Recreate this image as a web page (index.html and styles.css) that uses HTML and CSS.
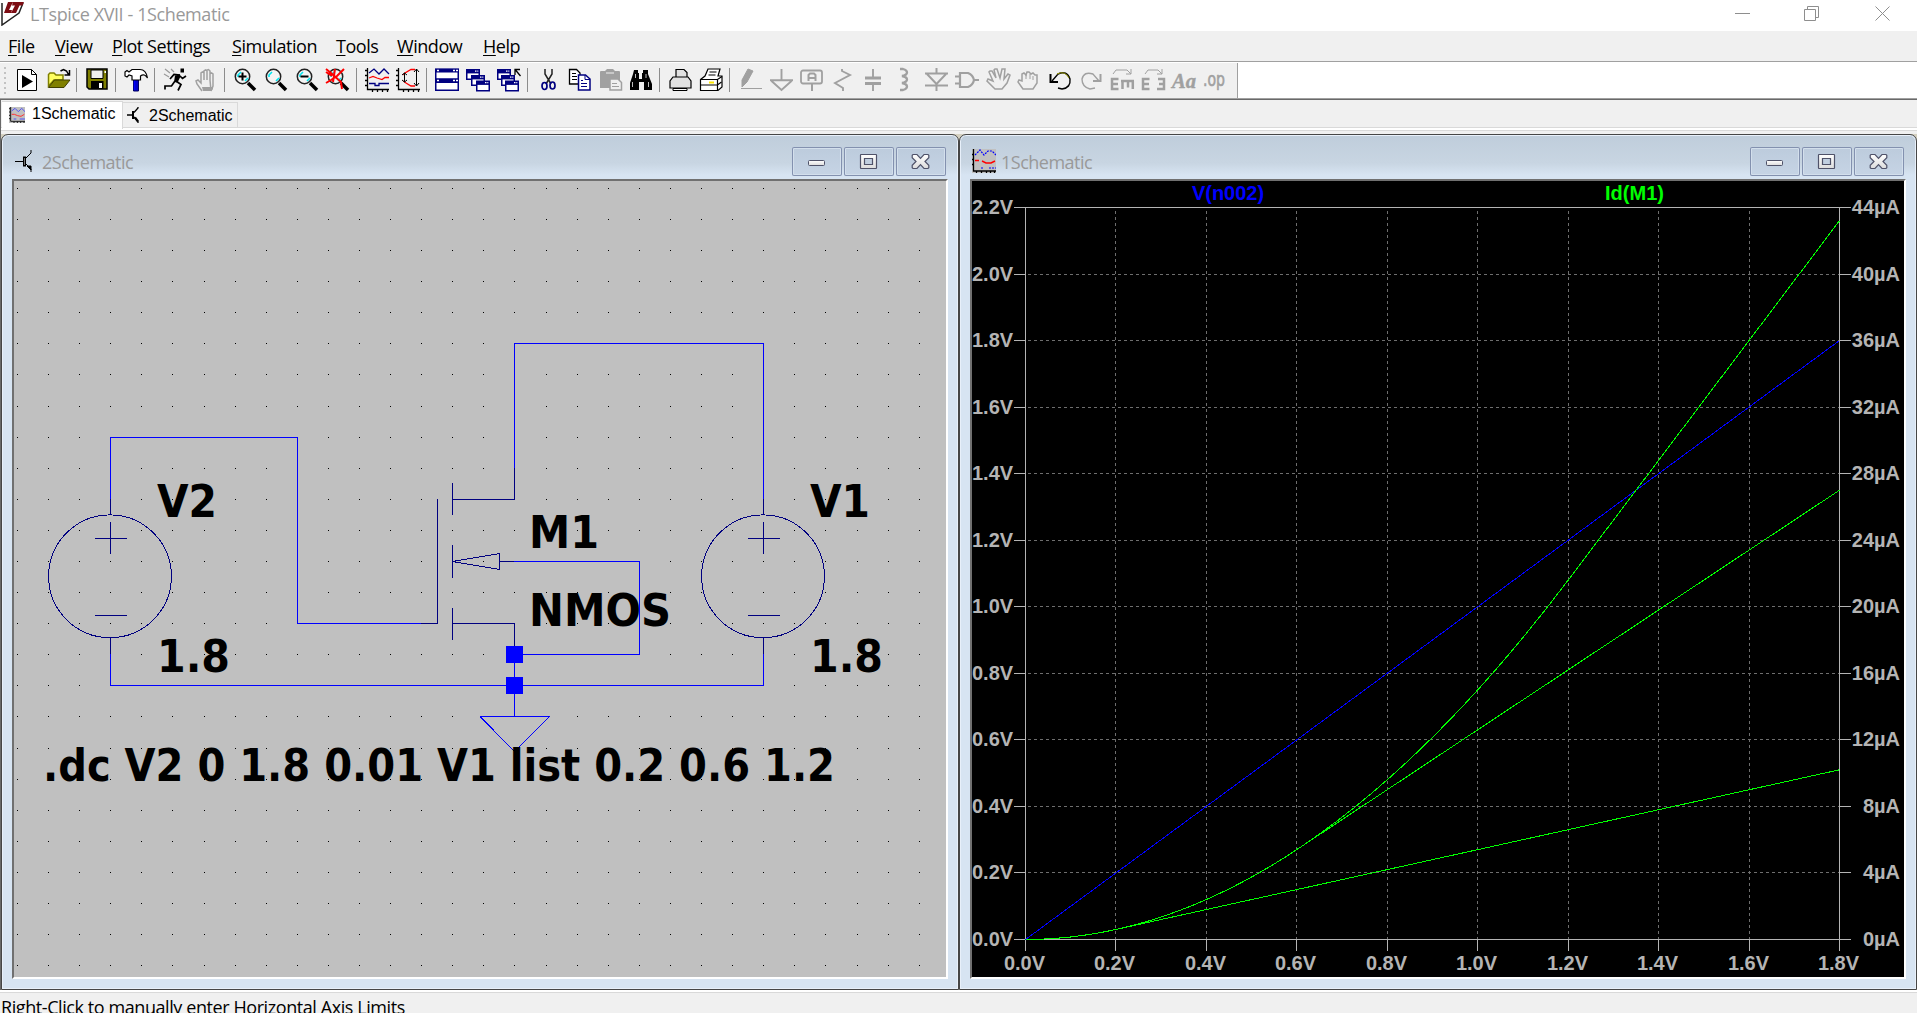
FILE: index.html
```html
<!DOCTYPE html>
<html lang="en">
<head>
<meta charset="utf-8">
<title>LTspice XVII - 1Schematic</title>
<link rel="stylesheet" href="styles.css">
</head>
<body>
<svg class="defs" width="0" height="0">
  <defs>
    <g id="lens"><path d="M15 15l7 7" stroke="#000" stroke-width="3.5" fill="none"/><circle cx="9.500" cy="8.500" r="7.200" fill="#f4f4f4" stroke="#222" stroke-width="1.500"/><path d="M5 9V7l3-3M12 13l3-3" stroke="#00e5f0" stroke-width="1.600" fill="none"/></g>
    <g id="miniwin"><rect x=".75" y=".75" width="12.500" height="9.500" fill="#fff" stroke="#000080" stroke-width="1.500"/><path d="M1 2.700h12" stroke="#000080" stroke-width="3.400"/><path d="M9 2.200h1.500M11.300 2.200h1" stroke="#fff" stroke-width="1.300"/></g>
    <g id="plotaxes"><path d="M2.500 0v21.500H24M0 2.500h2M0 7.500h2M0 12.500h2M0 17.500h2M7.500 22v2M12.500 22v2M17.500 22v2M22.500 22v2" fill="none" stroke="#000" stroke-width="1.300"/></g>
    <linearGradient id="glyph" x1="0" y1="0" x2="0" y2="1"><stop offset="0" stop-color="#fff"/><stop offset="1" stop-color="#dcdcdc"/></linearGradient>
    <g id="btn-min"><rect x="16.500" y="13.500" width="16" height="5" rx="1" fill="url(#glyph)" stroke="#4f5269"/></g>
    <g id="btn-max"><path fill-rule="evenodd" d="M17 7.500h15q.5 0 .5.5v13q0 .5-.5.5H17q-.5 0-.5-.5V8q0-.5.5-.5zM20.500 11.500v6h8v-6z" fill="url(#glyph)" stroke="#4f5269" stroke-width="1.200"/></g>
    <g id="btn-close"><path d="M17 7.500h4l3.500 3.800 3.500-3.800h4l.8.8v2.500L29 14.500l3.800 3.700v2.500l-.8.8h-4l-3.500-3.800-3.500 3.800h-4l-.8-.8v-2.500l3.800-3.700-3.800-3.700V8.300z" fill="url(#glyph)" stroke="#4f5269" stroke-width="1.200"/></g>
    <path id="dots" d="M17 .5h1m30 0h1m30 0h1m30 0h1m30 0h1m30 0h1m31 0h1m30 0h1m30 0h1m30 0h1m30 0h1m30 0h1m30 0h1m30 0h1m30 0h1m30 0h1m30 0h1m31 0h1m30 0h1m30 0h1m30 0h1m30 0h1m30 0h1m30 0h1m30 0h1m30 0h1m30 0h1m31 0h1m30 0h1m30 0h1" stroke="#000" fill="none"/>
    <g id="source">
      <circle cx="110" cy="576.300" r="61.400"/>
      <path d="M110.500 499v15M95 538.500h32M110.500 522v32M95 615.500h32M110.500 638v16"/>
    </g>
  </defs>
</svg>

<header class="titlebar">
  <svg class="app-icon" width="26" height="26" viewBox="0 0 26 26">
    <path d="M2 3v22l17-12 4-10" fill="#fff" stroke="#222" stroke-width="1.500"/>
    <path d="M8 2h5L9 10h3l-1 3H4zM13 2h11l-1.500 3.500h-3L16 13h-5l4-7.500h-3z" fill="#7d0d14"/>
  </svg>
  <h1>LTspice XVII - 1Schematic</h1>
  <svg class="window-controls" width="156" height="16" viewBox="0 0 156 16" fill="none" stroke="#8e8e8e">
    <path d="M0 7.500h15M69.500 3.500h11v11h-11zM72.500 3.500v-3h11v11h-3"/>
    <path d="M140.500.500l14 14M154.500.500l-14 14"/>
  </svg>
</header>

<nav class="menubar">
  <span><u>F</u>ile</span><span><u>V</u>iew</span><span><u>P</u>lot Settings</span><span><u>S</u>imulation</span><span><u>T</u>ools</span><span><u>W</u>indow</span><span><u>H</u>elp</span>
</nav>

<div class="toolbar-row">
<div class="toolbar">
  <i class="grip"></i>
  <svg viewBox="0 0 24 24"><path d="M2.500 1.500h14l5 5v16h-19z" fill="#fff" stroke="#000"/><path d="M16.500 1.500v5h5" fill="none" stroke="#000"/><path d="M7 7v13l11-6.500z"/></svg>
  <svg viewBox="0 0 24 24"><path d="M2.500 18V6.500L4 5h4l2 2h7v5H8z" fill="#ffff60" stroke="#808000" stroke-width="1.500"/><path d="M2.500 19.500L8.500 12H24l-6 7.500z" fill="#808000" stroke="#404000"/><path d="M14.500 3l3-1.500 3 1.500 2 3.500M23.500 2v5h-5" fill="none" stroke="#000" stroke-width="1.500"/></svg>
  <i class="sep"></i>
  <svg viewBox="0 0 24 24"><path d="M2 1h20v20H4l-2-2z" fill="#808000" stroke="#000" stroke-width="1.500"/><path d="M6 2h12v8.500H6z" fill="#f0f0f0" stroke="#000"/><path d="M6 13h12.500v8H6z"/><path d="M14 15h3v5h-3z" fill="#fff"/><path d="M19.500 3h1.500v2h-1.500z" fill="#fff"/></svg>
  <i class="sep"></i>
  <svg viewBox="0 0 24 24"><path d="M9.500 10h5v13h-5z" fill="#0000c8" stroke="#000060"/><path d="M10.500 11v11" stroke="#00f" stroke-width="1.500"/><path d="M1 4l2-1.500L5 4l3-2.500h8q6 0 7.500 8.500-3-5-7-2v4H8V8L5 7 3 9 1 8z" fill="#fff" stroke="#000" stroke-width="1.200"/></svg>
  <i class="sep"></i>
  <svg viewBox="0 0 24 24"><path d="M17.500.5H21v4h-3.500zM12 7.500l5-1 .5 2-3 6-3.500-.5z"/><path d="M17 7l-6-.5-4 4.500M17 8l2.500 2.500L23 8M13 13l5 3.500-3 6M12 13l-3.500 5H2v3.500" fill="none" stroke="#000" stroke-width="1.700"/><path d="M2 1l5 4M8 1l3 3M1 6l5 3" stroke="#999" stroke-width="1.200"/></svg>
  <svg class="gray" viewBox="0 0 24 24"><path d="M8 23l-5-7-1-3 2-1 3 3V5l1.500-1L10 5v7M10 12V3l1.500-1L13 3v9M13 11V2l1.500-.5L16 3v9M16 12V6l1.500-1L19 6v12l-2 5z" fill="none" stroke-width="1.500"/><path d="M8 19h11v2l-2 2H9z" fill="#a0a0a0" stroke="none"/></svg>
  <i class="sep"></i>
  <svg viewBox="0 0 24 24"><use href="#lens"/><path d="M9.500 4.500v8M5.500 8.500h8" stroke="#000" stroke-width="2"/></svg>
  <svg viewBox="0 0 24 24"><use href="#lens"/></svg>
  <svg viewBox="0 0 24 24"><use href="#lens"/><path d="M5.500 8.500h8" stroke="#000" stroke-width="2"/></svg>
  <svg viewBox="0 0 24 24"><use href="#lens"/><path d="M0 1l5 4 10 9 1 7M18 1l-7 7-6 4-5 3M0 4l6 4M9 1l-2 13" fill="none" stroke="#f00" stroke-width="2"/></svg>
  <i class="sep"></i>
  <svg viewBox="0 0 24 24"><use href="#plotaxes"/><path d="M4 5l5-4 5 5 5-5 5 5M4 15.500h6v2h4v-2h10" fill="none" stroke="#000080" stroke-width="1.300"/><path d="M4 10l4-1.500 4 1.500 5 1.500 3-2h4" fill="none" stroke="#f00" stroke-width="1.300"/></svg>
  <svg viewBox="0 0 24 24"><use href="#plotaxes"/><path d="M19 1.500h-4L9 5 7.500 7M7.500 13L10 15l5 3h4" fill="none" stroke="#f00" stroke-width="1.300"/><path d="M8.500 5v9M6 7l2.500-2L11 7M6 12l2.500 2 2.500-2M20.500 1v17M18 4l2.500-3L23 4M18 15l2.500 3 2.500-3" fill="none" stroke="#000"/></svg>
  <i class="sep"></i>
  <svg viewBox="0 0 24 24"><path d="M.750 1.500h22.500v9.500H.750zM.750 12h22.500v10.300H.750z" fill="#fff" stroke="#000080" stroke-width="1.500"/><path d="M0 2.500h24M0 13h24" stroke="#000080" stroke-width="4"/><path d="M2 2.500h2M18 2.500h2M21 2.500h2M2 12.500h2M18 12.500h2M21 12.500h2" stroke="#fff" stroke-width="1.500"/></svg>
  <svg viewBox="0 0 24 24"><use href="#miniwin" y="1"/><use href="#miniwin" x="5" y="7"/><use href="#miniwin" x="10" y="12.500"/></svg>
  <svg viewBox="0 0 24 24"><use href="#miniwin" y="1"/><use href="#miniwin" x="4" y="7"/><use href="#miniwin" x="8" y="12.500"/><path d="M18 7V1.500h5M18.500 2l5 6" fill="none" stroke="#000" stroke-width="1.300"/></svg>
  <i class="sep"></i>
  <svg viewBox="0 0 24 24"><path d="M9 1v5l6 10M16 1v5l-6 10" fill="none" stroke="#222" stroke-width="1.500"/><ellipse cx="8.500" cy="18" rx="2.500" ry="3.500" fill="none" stroke="#000080" stroke-width="1.700"/><ellipse cx="16.500" cy="17.500" rx="2.500" ry="3.500" fill="none" stroke="#000080" stroke-width="1.700"/></svg>
  <svg viewBox="0 0 24 24"><path d="M2.500 1.500h7l3.500 3.500v11H2.500z" fill="#fff" stroke="#000" stroke-width="1.300"/><path d="M5 5.500h4M5 8.500h5M5 11.500h5" stroke="#000"/><path d="M11.500 7h7l4.500 4v11H11.500z" fill="#fff" stroke="#000080" stroke-width="1.500"/><path d="M18 7v4.500h5M14 12.500h2M14 15.500h6M14 18.500h6" fill="none" stroke="#000080"/></svg>
  <svg viewBox="0 0 24 24"><path d="M2 4q0-1 1-1h4l2-2h6l2 2h4q1 0 1 1v16H2z" fill="#a0a0a0"/><path d="M8 5h8" stroke="#f0f0f0"/><path d="M12 11h8l3.500 3.500V22H12z" fill="#f0f0f0" stroke="#a0a0a0" stroke-width="1.500"/><path d="M14 15.500h5M14 18.500h7" stroke="#a0a0a0"/></svg>
  <svg viewBox="0 0 24 24"><path d="M5 2h4v3h1v6h3V5h1V2h5v4l4 10v6h-8v-8h-5v8H1v-7L4 6z"/><path d="M6.500 6v4M3.500 14v5M17 6v4M19.500 14v5" stroke="#bbb"/></svg>
  <i class="sep"></i>
  <svg viewBox="0 0 24 24"><path d="M8 9V1.500h8l3 3V9M5 9h15l3 4v7H2v-7z" fill="#e2e2e2" stroke="#000" stroke-width="1.200"/><path d="M5 20.500h14v2H5z" fill="#fff" stroke="#000"/></svg>
  <svg viewBox="0 0 24 24"><path d="M1.500 11.500L6 8l3-7h12l-2 7h4v11l-4 3.500H1.500z" fill="#fff" stroke="#000" stroke-width="1.200"/><path d="M1.500 11.500h17l4.500-3M18.500 11.500v11M1.500 17h17l4-3M10.500 4h7M9.500 7h7" fill="none" stroke="#000" stroke-width="1.200"/><path d="M10 14.500h5" stroke="#ffe800" stroke-width="2"/></svg>
  <i class="sep"></i>
  <svg class="gray" viewBox="0 0 24 24"><path d="M4 12L10 1l5 2-6 11-5 5z" fill="#a0a0a0"/><path d="M3 20.500h21"/></svg>
  <svg class="gray" viewBox="0 0 24 24"><path d="M12.500 1v11M1 12.300h23M2.500 13l10 9 10-9" fill="none" stroke-width="1.900"/></svg>
  <svg class="gray" viewBox="0 0 24 24"><rect x="1" y="2.500" width="21" height="13" rx="2" fill="none" stroke-width="1.800"/><path d="M12 16v7M8.500 13V7l1.500-1.500h4L15.500 7v6M8.500 10h7" fill="none" stroke-width="2"/></svg>
  <svg class="gray" viewBox="0 0 24 24"><path d="M11 1v2l8 4-15 8 8 5v3" fill="none" stroke-width="1.900"/></svg>
  <svg class="gray" viewBox="0 0 24 24"><path d="M11 1v8M11 15v8" stroke-width="1.900"/><path d="M3 10h16M3 15.500h16" stroke-width="3"/></svg>
  <svg class="gray" viewBox="0 0 24 24"><path d="M7 1h3q4 1 4 3.500T9 8q5 1 5 3.500T9 15q5 1 5 3.500T10 22H7" fill="none" stroke-width="2.300"/></svg>
  <svg class="gray" viewBox="0 0 24 24"><path d="M1 5.500h23M1 17.500h23M12.500 0v5M12.500 18v5M3 6l9.500 10L22 6" fill="none" stroke-width="2"/></svg>
  <svg class="gray" viewBox="0 0 24 24"><path d="M5 5h8q5 2 6 7-1 5-6 7H5zM0 8.500h5M0 15.500h5M19 12h5" fill="none" stroke-width="2.200"/></svg>
  <svg class="gray" viewBox="0 0 24 24"><path d="M9 21L1 13l1-2 5 2L3 4l1-1 2 0 4 7-2-8 1-1 2 0 3 9 2-9h3l-1 10 4-5 2 1-3 8-5 6z" fill="none" stroke-width="1.500"/></svg>
  <svg class="gray" viewBox="0 0 24 24"><path d="M6 21l-5-7 1-2 3 1V6l2-1 2 2 1-3h2l2 2 2-1 2 2 2 0v8l-4 6z" fill="none" stroke-width="1.500"/><path d="M9 7v4M13 6v5M16 8v4"/></svg>
  <svg viewBox="0 0 24 24"><path d="M4 13L10 6q9-4 12 5 1 9-8 10l-4-1" fill="none" stroke="#000" stroke-width="1.400"/><path d="M9 6q8-4 12 4" fill="none" stroke="#909000"/><path d="M2.500 6v8H10" fill="none" stroke="#000" stroke-width="2"/></svg>
  <svg class="gray" viewBox="0 0 24 24"><path d="M20 13l-6-7Q5 3 3 11q0 8 8 10l5-1" fill="none" stroke-width="1.400"/><path d="M21.500 6v7H14" fill="none" stroke-width="2"/></svg>
  <svg class="gray" viewBox="0 0 24 24"><path d="M3 6l3-4h11l4 4M21 1v5h-5" fill="none"/><path d="M8.500 11H2v10h6.500M2 16h6M11 13h13M12.500 21v-8M18 13v6.500M22.800 13v8" fill="none" stroke-width="2.500"/></svg>
  <svg class="gray" viewBox="0 0 24 24"><path d="M4 6l3-4h10l4 4M21 1v5h-5" fill="none"/><path d="M8.500 11H2v10h6.500M2 16h6M17 11h6v10h-7M18 16h5" fill="none" stroke-width="2.500"/></svg>
  <svg class="gray" viewBox="0 0 24 24"><text class="glyph-aa" x="0" y="20" textLength="24" lengthAdjust="spacingAndGlyphs">Aa</text></svg>
  <svg class="gray" viewBox="0 0 24 24"><text class="glyph-op" x="0" y="18" textLength="22" lengthAdjust="spacingAndGlyphs">.op</text></svg>
</div>
</div>

<div class="tabs">
  <div class="tab active">
    <svg width="16" height="16" viewBox="0 0 24 24"><rect width="24" height="24" fill="#c0c0c0"/><use href="#plotaxes"/><path d="M4 6l5-4 5 5 5-5 5 5M7 18h4M16 18h8" fill="none" stroke="#44f" stroke-width="1.300"/><path d="M4 11h4l5 2 5 1 5-3" fill="none" stroke="#f33" stroke-width="1.500"/></svg>
    <span>1Schematic</span>
  </div>
  <div class="tab">
    <svg width="16" height="18" viewBox="0 0 16 18"><path d="M0 9h6M11 1v1L7 6.500M7 11l4 4.500V17" stroke="#000" fill="none" stroke-width="1.300"/><path d="M6 5v8" stroke="#000" stroke-width="2"/><path d="M8 11.500l3 4" stroke="#000" stroke-width="2.200"/></svg>
    <span>2Schematic</span>
  </div>
</div>

<main class="workspace">
  <section class="child child-left">
    <div class="child-title">
      <svg width="24" height="24" viewBox="0 0 24 24" fill="none" stroke="#000"><path d="M3 12.500h8M12.500 8v9" /><rect x="11.500" y="8" width="2" height="9" fill="#777"/><path d="M14 9l5-5V1M14 15l5 5v3"/><path d="M15 17h4v4z" fill="#000"/></svg>
      <h2>2Schematic</h2>
      <div class="child-buttons">
        <svg viewBox="0 0 50 29"><use href="#btn-min"/></svg>
        <svg viewBox="0 0 50 29"><use href="#btn-max"/></svg>
        <svg viewBox="0 0 50 29"><use href="#btn-close"/></svg>
      </div>
    </div>
    <div class="canvas">
      <svg class="schematic" viewBox="14 181 932 796" shape-rendering="crispEdges" fill="none">
        <use href="#dots" y="188"/><use href="#dots" y="219"/><use href="#dots" y="250"/><use href="#dots" y="281"/><use href="#dots" y="312"/><use href="#dots" y="343"/><use href="#dots" y="374"/><use href="#dots" y="406"/><use href="#dots" y="437"/><use href="#dots" y="468"/><use href="#dots" y="499"/><use href="#dots" y="530"/><use href="#dots" y="561"/><use href="#dots" y="592"/><use href="#dots" y="623"/><use href="#dots" y="654"/><use href="#dots" y="685"/><use href="#dots" y="716"/><use href="#dots" y="748"/><use href="#dots" y="779"/><use href="#dots" y="810"/><use href="#dots" y="841"/><use href="#dots" y="872"/><use href="#dots" y="903"/><use href="#dots" y="934"/><use href="#dots" y="965"/>
        <g stroke="#0000ff">
          <path d="M110.500 499V437.500h187v186H421M110.500 654v31.500h653V654M514.500 468V343.500h249V499M514 561.500h125.500v93H514M514.500 654v62M480 716.500h69.500l-35 35-34.500-35"/>
        </g>
        <g stroke="#000080">
          <use href="#source"/>
          <use href="#source" x="653"/>
          <path d="M421 623.500h16.500V499M452.500 483v32M452.500 545v33M452.500 608v32M452 499.500h62.500V468M452 623.500h62.500V654M514 561.500h-14.500M452.500 561.500l47-8v16z"/>
        </g>
        <path d="M506 646h17v17h-17zM506 677h17v17h-17z" fill="#0000ff"/>
        <g class="part-label">
          <text x="157" y="517" textLength="60" lengthAdjust="spacingAndGlyphs">V2</text>
          <text x="157" y="672" textLength="73" lengthAdjust="spacingAndGlyphs">1.8</text>
          <text x="810" y="517" textLength="60" lengthAdjust="spacingAndGlyphs">V1</text>
          <text x="810" y="672" textLength="73" lengthAdjust="spacingAndGlyphs">1.8</text>
          <text x="529" y="548" textLength="70" lengthAdjust="spacingAndGlyphs">M1</text>
          <text x="529" y="626" textLength="142" lengthAdjust="spacingAndGlyphs">NMOS</text>
          <text x="43" y="781" textLength="792" lengthAdjust="spacingAndGlyphs">.dc V2 0 1.8 0.01 V1 list 0.2 0.6 1.2</text>
        </g>
      </svg>
    </div>
  </section>

  <section class="child child-right">
    <div class="child-title">
      <svg width="24" height="24" viewBox="0 0 24 24"><rect width="24" height="24" fill="#c0c0c0"/><path d="M1.500 0v22H24M0 5.500h1M0 10.500h1M0 15.500h1M4.500 22v2M9.500 22v2M14.500 22v2M18.500 22v2M22.500 22v2" fill="none" stroke="#000" stroke-width="1.300"/><path d="M3 6l5-5 4 5 4-4h4l4 4M9 19h2M17 19h7" fill="none" stroke="#00f" stroke-width="1.200" stroke-dasharray="2 1"/><path d="M3 11.500h4M10 12l4 2h5l4-2" fill="none" stroke="#f00" stroke-width="1.400"/></svg>
      <h2>1Schematic</h2>
      <div class="child-buttons">
        <svg viewBox="0 0 50 29"><use href="#btn-min"/></svg>
        <svg viewBox="0 0 50 29"><use href="#btn-max"/></svg>
        <svg viewBox="0 0 50 29"><use href="#btn-close"/></svg>
      </div>
    </div>
    <div class="canvas black">
      <svg class="plot" viewBox="972 181 932 796" fill="none">
        <g shape-rendering="crispEdges">
          <path class="grid" d="M1115.500 211v728M1206.500 211v728M1296.500 211v728M1387.500 211v728M1477.500 211v728M1568.500 211v728M1658.500 211v728M1749.500 211v728M1028 274.500h811M1028 340.500h811M1028 407.500h811M1028 473.500h811M1028 540.500h811M1028 606.500h811M1028 673.500h811M1028 739.500h811M1028 806.500h811M1028 872.500h811"/>
          <path class="axis" d="M1014 207.500h837M1014 939.500h837M1025.500 207v744M1839.500 207v744M1014 274.500h11m814 0h12M1014 340.500h11m814 0h12M1014 407.500h11m814 0h12M1014 473.500h11m814 0h12M1014 540.500h11m814 0h12M1014 606.500h11m814 0h12M1014 673.500h11m814 0h12M1014 739.500h11m814 0h12M1014 806.500h11m814 0h12M1014 872.500h11m814 0h12M1115.500 939v12M1206.500 939v12M1296.500 939v12M1387.500 939v12M1477.500 939v12M1568.500 939v12M1658.500 939v12M1749.500 939v12"/>
          <path d="M1025.500 939.500L1839.500 340.500" stroke="#0000ff"/>
          <path d="M1025.500 939.500Q1070.700 939.500 1115.900 929.500L1839.500 769.800M1025.500 939.500Q1161.200 939.500 1296.800 849.600L1839.500 490.200M1025.500 939.500Q1296.800 939.500 1568.200 580.100L1839.500 220.700" stroke="#00ff00"/>
        </g>
        <g class="tick">
          <text x="972" y="214">2.2V</text><text x="972" y="281">2.0V</text><text x="972" y="347">1.8V</text><text x="972" y="414">1.6V</text><text x="972" y="480">1.4V</text><text x="972" y="547">1.2V</text><text x="972" y="613">1.0V</text><text x="972" y="680">0.8V</text><text x="972" y="746">0.6V</text><text x="972" y="813">0.4V</text><text x="972" y="879">0.2V</text><text x="972" y="946">0.0V</text>
        </g>
        <g class="tick end">
          <text x="1900" y="214">44µA</text><text x="1900" y="281">40µA</text><text x="1900" y="347">36µA</text><text x="1900" y="414">32µA</text><text x="1900" y="480">28µA</text><text x="1900" y="547">24µA</text><text x="1900" y="613">20µA</text><text x="1900" y="680">16µA</text><text x="1900" y="746">12µA</text><text x="1900" y="813">8µA</text><text x="1900" y="879">4µA</text><text x="1900" y="946">0µA</text>
        </g>
        <g class="tick middle">
          <text x="1024.500" y="970">0.0V</text><text x="1114.500" y="970">0.2V</text><text x="1205.500" y="970">0.4V</text><text x="1295.500" y="970">0.6V</text><text x="1386.500" y="970">0.8V</text><text x="1476.500" y="970">1.0V</text><text x="1567.500" y="970">1.2V</text><text x="1657.500" y="970">1.4V</text><text x="1748.500" y="970">1.6V</text><text x="1838.500" y="970">1.8V</text>
          <text class="trace-v" x="1228" y="200">V(n002)</text>
          <text class="trace-i" x="1634.500" y="200">Id(M1)</text>
        </g>
      </svg>
    </div>
  </section>
</main>

<footer class="status">Right-Click to manually enter Horizontal Axis Limits</footer>
</body>
</html>
```
FILE: styles.css
```css
* { box-sizing: border-box; }

body {
  margin: 0;
  width: 1917px;
  height: 1013px;
  overflow: hidden;
  display: flex;
  flex-direction: column;
  background: #f0f0f0;
  font-family: "Open Sans", "Noto Sans", sans-serif;
  color: #000;
}

h1, h2 { margin: 0; font-weight: 400; }
.defs { position: absolute; }

/* Application frame */
.titlebar {
  flex: none;
  height: 31px;
  display: flex;
  align-items: flex-start;
  background: #fff;
}
.titlebar h1 {
  margin-left: 4px;
  font-size: 18px;
  line-height: 29px;
  letter-spacing: -0.4px;
  color: #999;
}
.window-controls { margin: 6px 26px 0 auto; }

.menubar {
  flex: none;
  height: 31px;
  padding-left: 8px;
  display: grid;
  grid-template-columns: 47px 57px 120px 104px 61px 86px 60px;
  border-bottom: 1px solid #a0a0a0;
  font-size: 18px;
  line-height: 31px;
  letter-spacing: -0.45px;
  white-space: nowrap;
}
.menubar u { text-underline-offset: 2px; text-decoration-thickness: 1px; }

.toolbar-row {
  flex: none;
  height: 38px;
  padding-top: 1px;
  background: #fff;
  border-bottom: 1px solid #696969;
  box-shadow: inset 0 -1px #a0a0a0;
}
.toolbar {
  width: 1238px;
  height: 35px;
  padding: 5px 0 0 4px;
  display: flex;
  background: #f0f0f0;
  border-right: 1px solid #a0a0a0;
}
.toolbar svg {
  flex: none;
  width: 24px;
  height: 24px;
  margin-right: 7px;
  overflow: visible;
}
.toolbar .gray { stroke: #a0a0a0; }
.toolbar .grip {
  width: 2px;
  height: 28px;
  margin: -1px 9px 0 0;
  background: repeating-linear-gradient(#c2c2c2 0 2px, transparent 2px 5px);
}
.toolbar .sep {
  width: 1px;
  height: 24px;
  margin: 0 8px 0 -1px;
  background: #8c8c8c;
}
.glyph-aa { font: italic bold 20px "Liberation Serif", serif; fill: #a0a0a0; stroke: #a0a0a0; stroke-width: .4px; }
.glyph-op { font: 19px "DejaVu Sans", sans-serif; fill: #a0a0a0; stroke: #a0a0a0; stroke-width: .6px; }

.tabs {
  flex: none;
  height: 34px;
  display: flex;
  align-items: flex-start;
  padding: 1px 3px 0 1px;
  border-left: 1px solid #696969;
  background: linear-gradient(#f0f0f0 27px, #d9d9d9 27px 28px, #fff 28px 30px, #d9d9d9 30px 31px, #f0f0f0 31px);
  font: 16px/20px "Liberation Sans", Arial, sans-serif;
}
.tab {
  height: 26px;
  margin-top: 1px;
  padding: 3px 4px 0 4px;
  display: flex;
  gap: 6px;
  border: 1px solid #d9d9d9;
  border-left: 0;
  border-bottom: 0;
}
.tab span { width: 84px; }
.tab.active {
  height: 28px;
  width: 121px;
  margin-top: 0;
  padding: 2px 4px 0 7px;
  gap: 7px;
  background: #fff;
}
.tab.active svg { margin-top: 3px; }

/* Child windows */
.workspace {
  flex: none;
  height: 856px;
  padding-left: 1px;
  display: flex;
  background: linear-gradient(90deg, #696969 1px, #d4d0c0 1px);
}
.child {
  width: 958px;
  height: 856px;
  padding: 0 10px 10px;
  border: 1px solid #464646;
  border-radius: 7px 7px 0 0;
  box-shadow: inset 0 0 0 1px #e8f0fa;
  background: linear-gradient(#bfcddb, #c8d5e2 28px, #d7e4f2 40px);
}
.child-title {
  height: 44px;
  display: flex;
  align-items: flex-start;
}
.child-title > svg { margin-top: 14px; }
.child-right .child-title > svg { margin-left: 2px; }
.child-title h2 {
  margin: 14px 0 0 5px;
  font-size: 18px;
  line-height: 26px;
  letter-spacing: -0.5px;
  color: #999;
}
.child-left .child-title h2 { margin-left: 6px; }
.child-buttons { margin: 12px 2px 0 auto; display: flex; gap: 2px; }
.child-buttons svg {
  width: 50px;
  height: 29px;
  border-radius: 2px;
  box-shadow: inset 0 0 0 1px #8391af, inset 0 0 0 2px #d3dfec;
  background: linear-gradient(#bccbdc, #c6d4e5);
}
.canvas {
  width: 936px;
  height: 800px;
  border: 2px solid;
  border-color: #707070 #fff #fff #707070;
  background: #c0c0c0;
}
.canvas.black { background: #000; }
.canvas svg { display: block; width: 932px; height: 796px; }

.part-label {
  font: bold 45px "DejaVu Sans", sans-serif;
  fill: #000;
}
.grid { stroke: #6e6e6e; stroke-dasharray: 3 3; }
.axis { stroke: #b4b4b4; }
.tick { font: bold 20px "Liberation Sans", Arial, sans-serif; fill: #b4b4b4; }
.end { text-anchor: end; }
.middle { text-anchor: middle; }
.tick .trace-v { fill: #0000ff; }
.tick .trace-i { fill: #00ff00; }

.status {
  flex: none;
  height: 23px;
  padding: 4px 0 0 1px;
  border-top: 1px solid #fff;
  box-shadow: inset 0 1px #fff, inset 0 2px #d9d9d9;
  font-size: 18px;
  line-height: 24px;
  letter-spacing: -0.42px;
  white-space: nowrap;
  overflow: hidden;
}
```
